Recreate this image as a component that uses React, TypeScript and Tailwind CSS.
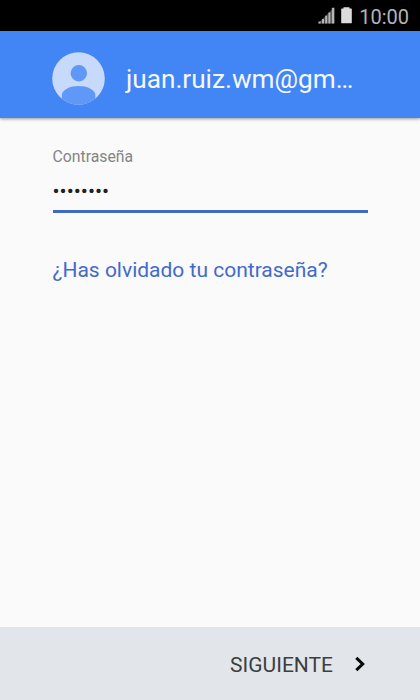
import { useState } from 'react'

const SignalIcon = () => (
  <svg width="17" height="17" viewBox="0 0 17 17">
    <path d="M0 16.500 16.500 0v16.500z" fill="#4a4a4a" />
    <g fill="#b4b4b4">
      <rect x="0.5" y="14.500" width="2.200" height="2" />
      <rect x="4" y="12" width="2" height="4.500" />
      <rect x="7.200" y="8.700" width="2" height="7.800" />
      <rect x="10.400" y="5.500" width="2" height="11" />
      <rect x="13.800" y="0.800" width="2.400" height="15.700" />
    </g>
  </svg>
)

const BatteryIcon = () => (
  <svg width="11" height="17" viewBox="0 0 11 17" fill="#dcdcdc">
    <path d="M2.500 0.300h6v1.200h1.700a.6.6 0 0 1 .6.6v13.600a.6.6 0 0 1-.6.6H.8a.6.6 0 0 1-.6-.6V2.100a.6.6 0 0 1 .6-.6h1.700z" />
  </svg>
)

const Avatar = () => (
  <svg width="53" height="53" viewBox="0 0 53 53" className="shrink-0">
    <defs>
      <clipPath id="avatar">
        <circle cx="26.5" cy="26.5" r="26.3" />
      </clipPath>
    </defs>
    <g clipPath="url(#avatar)">
      <rect width="53" height="53" fill="#c7dafc" />
      <circle cx="26.800" cy="21.200" r="8.200" fill="#5f98f6" />
      <path d="M9.900 53V42C11.500 37.500 18 34 26.600 34s15.100 3.500 16.700 8V53z" fill="#5f98f6" />
    </g>
  </svg>
)

const App = () => {
  const [password] = useState('••••••••')

  return (
    <div className="flex flex-col w-[420px] h-[700px] overflow-hidden bg-[#fafafa] font-['Roboto',sans-serif]">
      {/* Barra de estado */}
      <div className="flex items-center justify-end h-[31px] shrink-0 pr-[11px] bg-black">
        <SignalIcon />
        <div className="ml-[6px]">
          <BatteryIcon />
        </div>
        <span className="ml-[7px] mt-[3px] text-[20px] leading-[28px] text-[#b4b4b4]">10:00</span>
      </div>

      {/* Cabecera con la cuenta */}
      <header className="flex items-center h-[87px] shrink-0 pt-[8px] pb-[1px] pl-[52px] bg-[#4285f4] shadow-[0_1px_3px_rgba(0,0,0,0.4)]">
        <Avatar />
        <h1 className="ml-[21px] mt-[2px] text-[26.200px] leading-[32px] text-[#f4f8ff] whitespace-nowrap">juan.ruiz.wm@gm…</h1>
      </header>

      <main className="flex flex-col flex-1 items-start pl-[52.500px] pt-[29px]">
        <label className="text-[15.800px] leading-[20px] text-[#848484]">Contraseña</label>
        <div className="w-[315px] h-[46px] pt-[11px] border-b-[3px] border-[#4169c4] text-[21px] leading-[26px] text-[#202020]">
          {password}
        </div>
        <a className="mt-[43px] text-[21px] leading-[28px] text-[#416bca] whitespace-nowrap">¿Has olvidado tu contraseña?</a>
      </main>

      <footer className="flex items-center justify-end h-[73px] shrink-0 pr-[54px] pt-[1px] bg-[#e2e6ea]">
        <button className="flex items-center">
          <span className="mt-[1px] text-[21px] leading-[28px] text-[#3c3e40]">SIGUIENTE</span>
          <svg width="11" height="16" viewBox="0 0 11 16" fill="none" className="ml-[22px]">
            <path d="M1.300 1.800 7.700 8l-6.400 6.200" stroke="#080808" strokeWidth="3" />
          </svg>
        </button>
      </footer>
    </div>
  )
}

export default App
